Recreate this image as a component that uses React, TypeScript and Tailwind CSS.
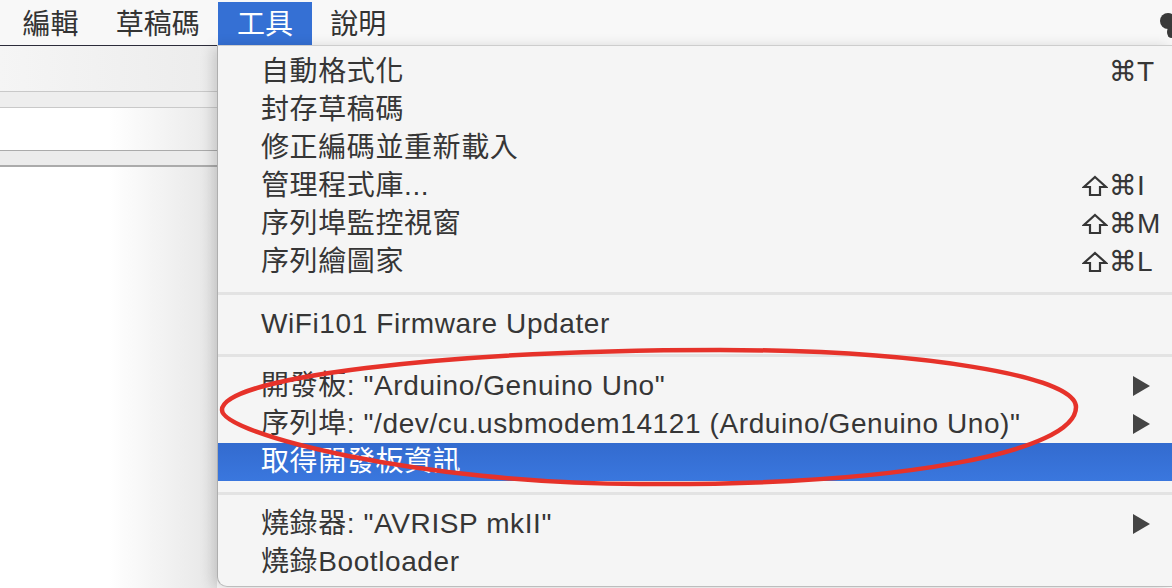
import React from "react";

type Row =
  | { kind: "item"; label: string; shift?: boolean; cmd?: boolean; key?: string; arrow?: boolean; active?: boolean }
  | { kind: "sep" };

const rows: Row[] = [
  { kind: "item", label: "自動格式化", cmd: true, key: "T" },
  { kind: "item", label: "封存草稿碼" },
  { kind: "item", label: "修正編碼並重新載入" },
  { kind: "item", label: "管理程式庫...", shift: true, cmd: true, key: "I" },
  { kind: "item", label: "序列埠監控視窗", shift: true, cmd: true, key: "M" },
  { kind: "item", label: "序列繪圖家", shift: true, cmd: true, key: "L" },
  { kind: "sep" },
  { kind: "item", label: "WiFi101 Firmware Updater" },
  { kind: "sep" },
  { kind: "item", label: '開發板: "Arduino/Genuino Uno"', arrow: true },
  { kind: "item", label: '序列埠: "/dev/cu.usbmodem14121 (Arduino/Genuino Uno)"', arrow: true },
  { kind: "item", label: "取得開發板資訊", active: true },
  { kind: "sep" },
  { kind: "item", label: '燒錄器: "AVRISP mkII"', arrow: true },
  { kind: "item", label: "燒錄Bootloader" },
];

const menus = ["編輯", "草稿碼", "工具", "說明"];

function Arrow() {
  return (
    <svg width="19" height="20" viewBox="0 0 19 20">
      <polygon points="1,0 18,10 1,20" fill="#444" />
    </svg>
  );
}

// outlined shift arrow, like the mac menu glyph
function Shift() {
  return (
    <svg width="26" height="22" viewBox="0 0 26 22">
      <path d="M13 2 L24 12 L18 12 L18 20 L8 20 L8 12 L2 12 Z" fill="none" stroke="#363636" strokeWidth="2.2" strokeLinejoin="miter" />
    </svg>
  );
}

function MenuRow({ row }: { row: Row }) {
  if (row.kind === "sep") {
    return (
      <div className="h-[24px] flex flex-col">
        <div className="h-[11px]" />
        <div className="h-[3px] bg-[#e3e3e3]" />
      </div>
    );
  }
  return (
    <div
      className={`h-[38px] flex items-center pl-[43px] ${
        row.active ? "bg-gradient-to-b from-[#336bcf] to-[#3a77de] text-white" : "text-[#363636]"
      }`}
    >
      <div className="flex-1 whitespace-nowrap">{row.label}</div>
      <div className="w-[90px] flex items-center">
        {row.arrow ? (
          <>
            <div className="w-[50px]" />
            <Arrow />
          </>
        ) : (
          <>
            <span className="w-[27px] flex items-center">{row.shift ? <Shift /> : null}</span>
            <span className="w-[27px] text-center text-[28px] leading-none font-['DejaVu_Sans',sans-serif]">
              {row.cmd ? "⌘" : ""}
            </span>
            <span className="pl-[1px]">{row.key}</span>
          </>
        )}
      </div>
    </div>
  );
}

export default function App() {
  return (
    <div className="relative w-[1172px] h-[588px] overflow-hidden bg-white text-[28px] tracking-[0.6px] font-['Liberation_Sans','Noto_Sans_CJK_TC',sans-serif]">
      {/* menu bar */}
      <div className="h-[46px] bg-[#f8f8f8] border-b border-[#2c2c3a] flex items-start pt-[2px] pl-[4px] tracking-normal">
        {menus.map((m) => (
          <div
            key={m}
            className={`h-[43px] px-[18.6px] pt-[3px] flex items-center leading-none ${
              m === "工具" ? "bg-[#3570d4] text-white" : "text-[#333]"
            }`}
          >
            {m}
          </div>
        ))}
        <div className="flex-1" />
        <svg width="13" height="40" viewBox="0 0 13 40" className="mt-[8px]">
          <circle cx="9" cy="11" r="8" fill="#3a3a3a" />
          <ellipse cx="12" cy="22" rx="4" ry="6" fill="#3a3a3a" />
        </svg>
      </div>

      {/* editor area behind the menu */}
      <div className="w-[217px] flex flex-col">
        <div className="h-[45px] bg-gradient-to-r from-[#f5f5f5] to-[#ececec]" />
        <div className="h-[17px] bg-[#eeeeee] border-t border-b border-[#c9c9c9]" />
        <div className="h-[42px] bg-gradient-to-r from-white via-white to-[#e9e9e9]" />
        <div className="h-[17px] bg-[#ececec] border-t border-b-2 border-[#ababab]" />
        <div className="h-[430px] bg-gradient-to-r from-white via-white to-[#e6e6e6]" />
      </div>

      {/* dropdown menu */}
      <div className="absolute left-[217px] top-[45px] right-0 bottom-[1px] bg-[#f5f5f5] border-l border-t border-b border-l-[#aeaeae] border-t-[#cdcdcd] border-b-[#bdbdbd] rounded-bl-[10px] pt-[7px] shadow-[-4px_2px_14px_rgba(0,0,0,0.16)]">
        {rows.map((r, i) => (
          <MenuRow key={i} row={r} />
        ))}
      </div>

      {/* red hand-drawn annotation */}
      <svg className="absolute inset-0 pointer-events-none" width="1172" height="588" viewBox="0 0 1172 588">
        <path
          d="M222 410 C222 378 440 350 720 350 C920 350 1076 376 1076 407 C1076 452 900 486 640 484 C420 484 222 434 222 410 Z"
          fill="none"
          stroke="#e6322a"
          strokeWidth="4.5"
        />
      </svg>
    </div>
  );
}
